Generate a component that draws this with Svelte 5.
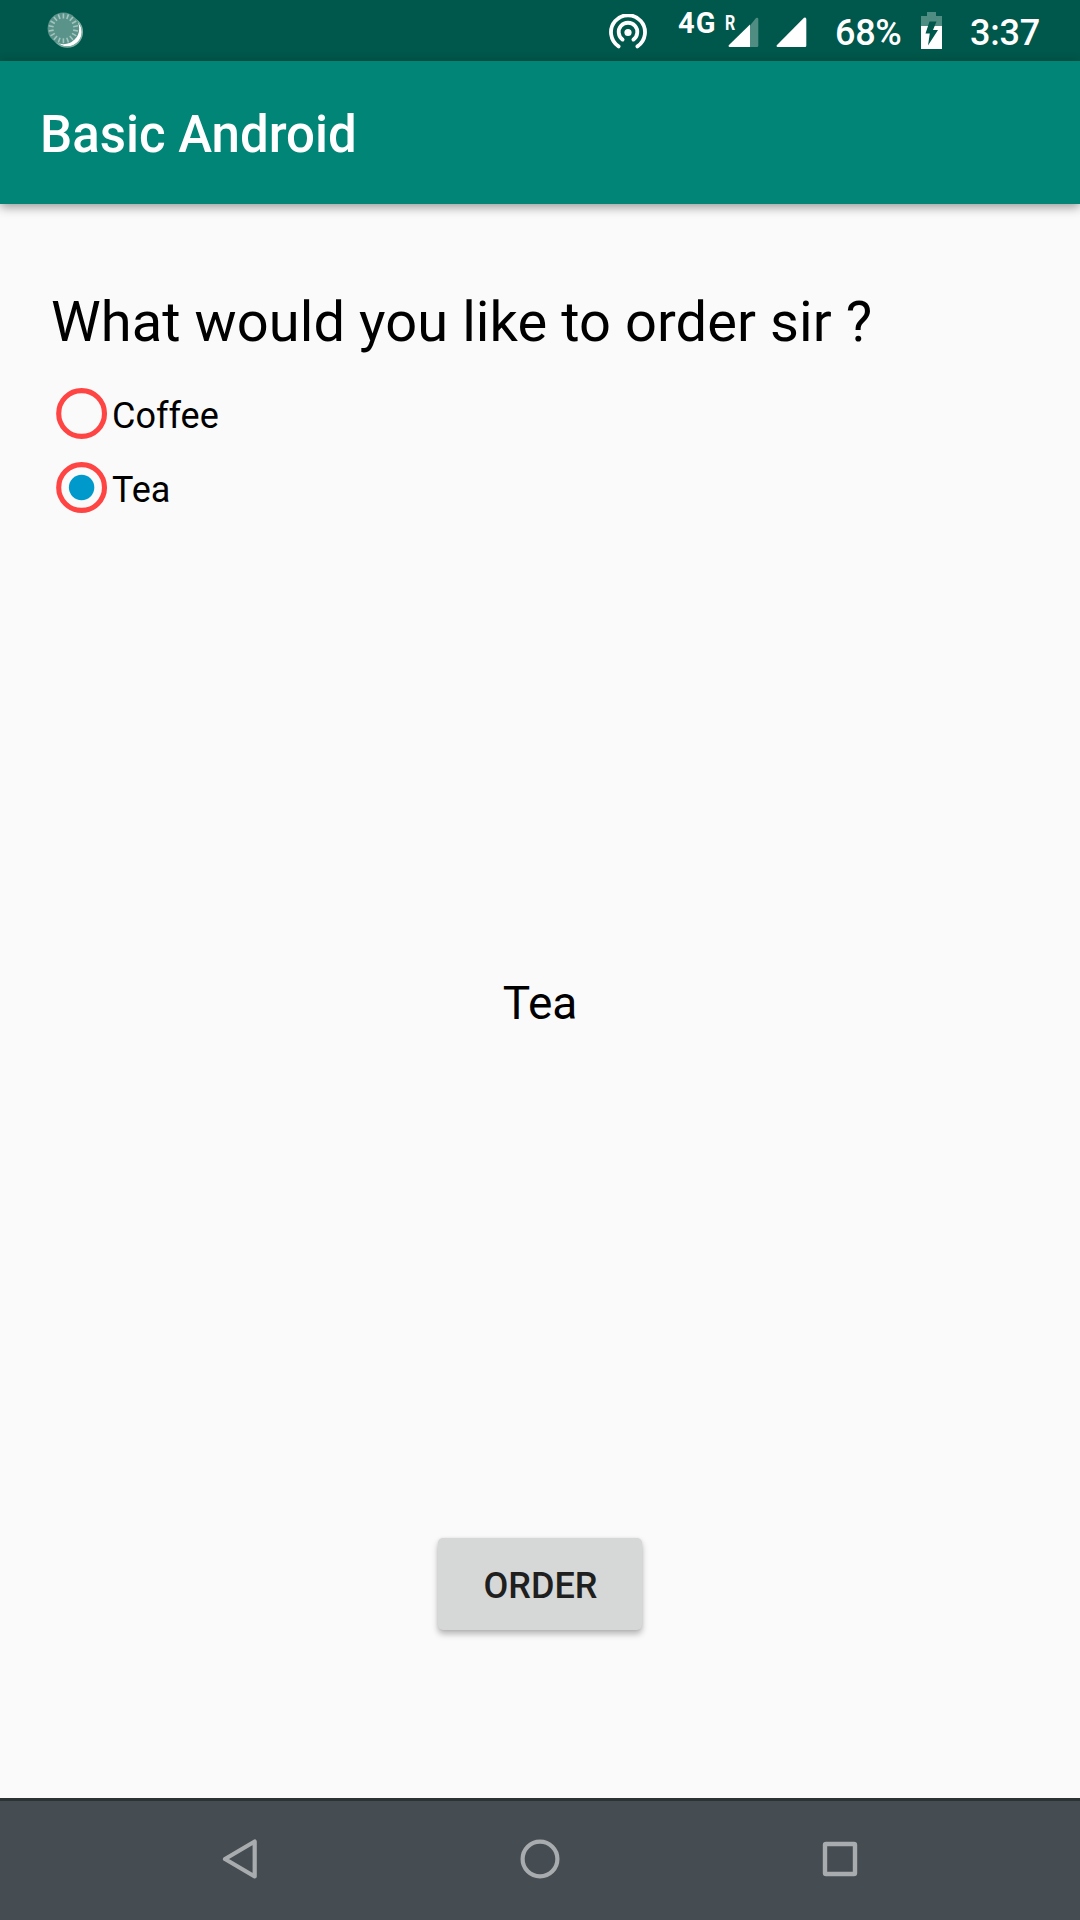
<script>
  let choices = ['Coffee', 'Tea'];
  let selected = $state('Tea');
  let ordered = $state('Tea');
  const ticks = Array.from({ length: 18 }, (_, i) => i * 20);
</script>

<div class="screen">
  <header class="status">
    <svg class="spinner" width="38" height="38" viewBox="0 0 38 38">
      <circle cx="20.3" cy="20" r="14.6" fill="#fff" />
      <circle cx="20.3" cy="20" r="15" fill="none" stroke="#7fb0a6" stroke-width="1.5" />
      <circle cx="16.4" cy="16.4" r="15.8" fill="#5a9389" />
      {#each ticks as angle}
        <line x1="16.4" y1="1.500" x2="16.4" y2="6.500" stroke="#a3c4bf" stroke-width="1.6" transform="rotate({angle} 16.4 16.4)" />
      {/each}
    </svg>
    <svg class="hotspot" width="40" height="38" viewBox="0 0 40 38">
      <g fill="none" stroke="#fff" stroke-width="3.8" stroke-linecap="round">
        <path d="M10.6 32.4A17 17 0 1 1 29.4 32.4" />
        <path d="M14.6 25.6A9.3 9.3 0 1 1 25.4 25.6" />
      </g>
      <circle cx="20" cy="18.500" r="3.6" fill="#fff" />
    </svg>
    <span class="net">4G</span>
    <div class="roam">
      <svg width="31" height="31" viewBox="0 0 31 31">
        <path d="M22 8.5L28 1Q30 0 30.300 2V28.500Q30.300 30 29 30H22Z" fill="#4f8c81" />
        <path d="M22 7.500V30H1.500Q-.2 29.500 1 28Z" fill="#fff" />
      </svg>
      <span class="r">R</span>
    </div>
    <svg class="signal" width="31" height="31" viewBox="0 0 31 31">
      <path d="M28 .8Q30 -.4 30.300 2V28.500Q30.300 30 29 30H1.500Q-.2 29.500 1 28Z" fill="#fff" />
    </svg>
    <span class="pct">68%</span>
    <svg class="battery" width="21" height="37" viewBox="0 0 21 37">
      <path d="M6 0H15V4H21V14H0V4H6Z" fill="#4f8c81" />
      <path d="M0 14H21V37H0Z" fill="#fff" />
      <path d="M8.500 9.500H15.500L12 18H17L7 33.500L8.800 21.500H4.500Z" fill="#00574b" />
    </svg>
    <span class="time">3:37</span>
  </header>

  <div class="appbar"><h1>Basic Android</h1></div>

  <main>
    <h2>What would you like to order sir ?</h2>
    <div class="group" role="radiogroup">
      {#each choices as choice}
        <div class="radio" role="radio" tabindex="-1" aria-checked={selected === choice} onclick={() => (selected = choice)} onkeydown={() => (selected = choice)}>
          <svg width="61" height="61" viewBox="0 0 61 61">
            <circle cx="30.600" cy="30.500" r="22.900" fill="none" stroke="#ff4444" stroke-width="5.100" />
            {#if selected === choice}<circle cx="30.600" cy="30.500" r="12.700" fill="#0099cc" />{/if}
          </svg>
          <span>{choice}</span>
        </div>
      {/each}
    </div>
    <p class="result">{ordered}</p>
    <button onclick={() => (ordered = selected)}>ORDER</button>
  </main>

  <nav>
    <svg width="40" height="44" viewBox="0 0 40 44">
      <path d="M5 22L34.700 4.500V39.500Z" fill="none" stroke="#a8acaf" stroke-width="4.200" stroke-linejoin="round" />
    </svg>
    <svg width="44" height="44" viewBox="0 0 44 44">
      <circle cx="22" cy="22" r="17.400" fill="none" stroke="#a8acaf" stroke-width="4.200" />
    </svg>
    <svg width="40" height="44" viewBox="0 0 40 44">
      <rect x="5" y="7" width="30" height="30" rx="1" fill="none" stroke="#a8acaf" stroke-width="4.400" />
    </svg>
  </nav>
</div>

<style>
  :global(body) { margin: 0; }
  .screen {
    width: 1080px;
    height: 1920px;
    display: flex;
    flex-direction: column;
    background: #fafafa;
    color: #000;
    font-family: Roboto, sans-serif;
    overflow: hidden;
  }
  svg { display: block; flex: none; }
  .status {
    height: 61px;
    flex: none;
    display: flex;
    align-items: flex-start;
    box-sizing: border-box;
    padding-left: 47px;
    background: #00574b;
    color: #fff;
    font-weight: 500;
    white-space: nowrap;
  }
  .status span { display: block; }
  .spinner { margin-top: 12px; }
  .hotspot { margin: 14px 0 0 523px; }
  .net { margin: 7px 0 0 30px; width: 50px; font-size: 29px; line-height: 32px; font-weight: 700; letter-spacing: 1px; }
  .roam { position: relative; margin-top: 17px; width: 31px; }
  .r { position: absolute; left: -3px; top: -5px; font-size: 20px; line-height: 22px; font-weight: 700; transform: scaleX(.8); transform-origin: left; }
  .signal { margin: 17px 0 0 17px; }
  .pct { margin: 12px 0 0 28px; width: 86px; font-size: 36px; line-height: 42px; letter-spacing: -.3px; }
  .battery { margin-top: 12px; }
  .time { margin: 12px 0 0 28px; font-size: 36px; line-height: 42px; letter-spacing: -.2px; }
  .appbar {
    height: 143px;
    flex: none;
    box-sizing: border-box;
    padding: 4px 40px 0;
    display: flex;
    align-items: center;
    background: #008577;
    box-shadow: 0 3px 10px rgba(0, 0, 0, .4);
  }
  h1 { margin: 0; color: #fff; font-size: 51px; line-height: 60px; font-weight: 500; }
  main {
    flex: 1;
    box-sizing: border-box;
    padding: 85px 51px 0;
    display: flex;
    flex-direction: column;
    align-items: center;
  }
  h2 { align-self: flex-start; margin: 0; font-size: 56px; line-height: 66px; font-weight: 400; letter-spacing: .08px; white-space: nowrap; }
  .group { align-self: flex-start; margin-top: 21px; }
  .radio { height: 74px; display: flex; align-items: center; font-size: 36px; line-height: 42px; }
  .radio span { padding-top: 6px; }
  .result { margin: 452px 0 0; font-size: 46px; line-height: 54px; height: 54px; }
  button {
    margin-top: 508px;
    width: 204px;
    height: 92px;
    padding: 4px 0 0 1px;
    border: 0;
    border-radius: 5px;
    background: #d6d7d7;
    color: #1f1f1f;
    font: 500 36px/42px Roboto, sans-serif;
    box-shadow: 0 4px 6px rgba(0, 0, 0, .28), 0 0 3px rgba(0, 0, 0, .08);
  }
  nav {
    height: 122px;
    flex: none;
    box-sizing: border-box;
    border-top: 3px solid #2b3232;
    background: #454d53;
    display: flex;
    align-items: center;
    justify-content: space-between;
    padding: 0 220px 3px;
  }
</style>
